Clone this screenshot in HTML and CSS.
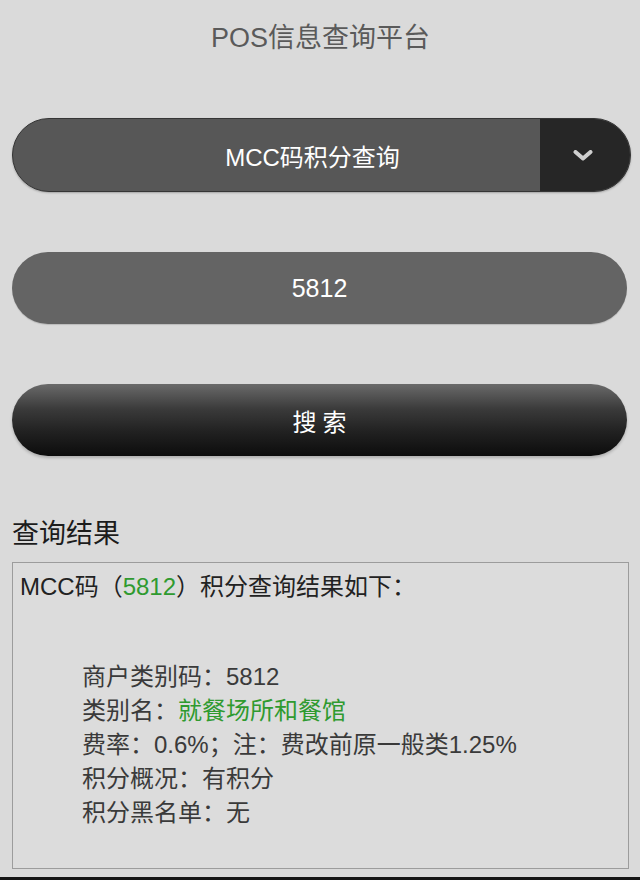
FILE: index.html
```html
<!DOCTYPE html>
<html lang="zh-CN">
<head>
    <meta charset="UTF-8">
    <meta name="viewport" content="width=device-width, initial-scale=1.0">
    <title>POS信息查询平台</title>
    <link rel="stylesheet" href="styles.css">
</head>
<body>
    <div class="page">
        <h1 class="title">POS信息查询平台</h1>

        <!-- 查询类型 -->
        <div class="select-box">
            <span class="select-label">MCC码积分查询</span>
            <span class="select-arrow">
                <svg width="20" height="11" viewBox="0 0 20 11">
                    <polyline points="2.5,2 10,8.5 17.5,2" fill="none" stroke="#cfcfcf" stroke-width="4" stroke-linejoin="round" stroke-linecap="round"/>
                </svg>
            </span>
        </div>

        <!-- 输入框 -->
        <div class="input-box">5812</div>

        <button class="search-btn">搜索</button>

        <!-- 查询结果 -->
        <h2 class="result-title">查询结果</h2>
        <div class="result-box">
            <p class="result-head">MCC码（<span class="green">5812</span>）积分查询结果如下：</p>
            <div class="result-list">
                <p>商户类别码：5812</p>
                <p>类别名：<span class="green">就餐场所和餐馆</span></p>
                <p>费率：0.6%；注：费改前原一般类1.25%</p>
                <p>积分概况：有积分</p>
                <p>积分黑名单：无</p>
            </div>
        </div>
    </div>
    <div class="bottom-bar"></div>
</body>
</html>
```

FILE: styles.css
```css
/* General */
body {
    margin: 0;
    padding: 0;
    background: #dadada;
    font-family: "Liberation Sans", "Noto Sans CJK SC", sans-serif;
    color: #222;
}

.page {
    padding: 0 11px 0 12px;
}

.title {
    margin: 0;
    padding-top: 20px;
    font-size: 27px;
    line-height: 36px;
    font-weight: normal;
    color: #5a5a5a;
    text-align: center;
}

/* Select */
.select-box {
    margin-top: 62px;
    height: 72px;
    display: flex;
    border: 1px solid #353535;
    border-radius: 37px;
    overflow: hidden;
    background: #575757;
    box-shadow: 0 1px 2px rgba(0, 0, 0, 0.25);
    margin-right: -2px;
}

.select-label {
    flex: 1;
    display: flex;
    align-items: center;
    justify-content: center;
    padding-left: 72px;
    font-size: 24px;
    color: #fff;
}

.select-arrow {
    width: 86px;
    background: #262626;
    display: flex;
    align-items: center;
    justify-content: center;
    padding-right: 4px;
}

/* Input */
.input-box {
    margin-top: 60px;
    height: 72px;
    border-radius: 36px;
    background: #646464;
    color: #fff;
    font-size: 25px;
    display: flex;
    align-items: center;
    justify-content: center;
    margin-right: 2px;
    box-shadow: 0 1px 1px rgba(0, 0, 0, 0.15);
}

/* Button */
.search-btn {
    display: block;
    width: calc(100% - 2px);
    margin-top: 60px;
    height: 72px;
    border: none;
    border-radius: 36px;
    background: linear-gradient(to bottom, #6a6a6a 0%, #3a3a3a 35%, #222 65%, #0c0c0c 100%);
    color: #fff;
    font-family: inherit;
    font-size: 24px;
    letter-spacing: 6px;
    text-indent: 6px;
    box-shadow: 0 2px 3px rgba(0, 0, 0, 0.2);
}

/* Result */
.result-title {
    margin: 60px 0 0 0;
    font-size: 27px;
    line-height: 36px;
    font-weight: normal;
    color: #1c1c1c;
}

.result-box {
    margin-top: 10px;
    border: 1px solid #9c9c9c;
    padding: 7px 7px 38px 7px;
    background: #dcdcdc;
    font-size: 24px;
    line-height: 34px;
}

.result-box p {
    margin: 0;
}

.result-head {
    color: #222;
}

.result-list {
    margin-top: 56px;
    margin-left: 62px;
    color: #3a3a3a;
}

.green {
    color: #2f9a2f;
}

.bottom-bar {
    margin-top: 8px;
    height: 3px;
    background: #151515;
}
```
